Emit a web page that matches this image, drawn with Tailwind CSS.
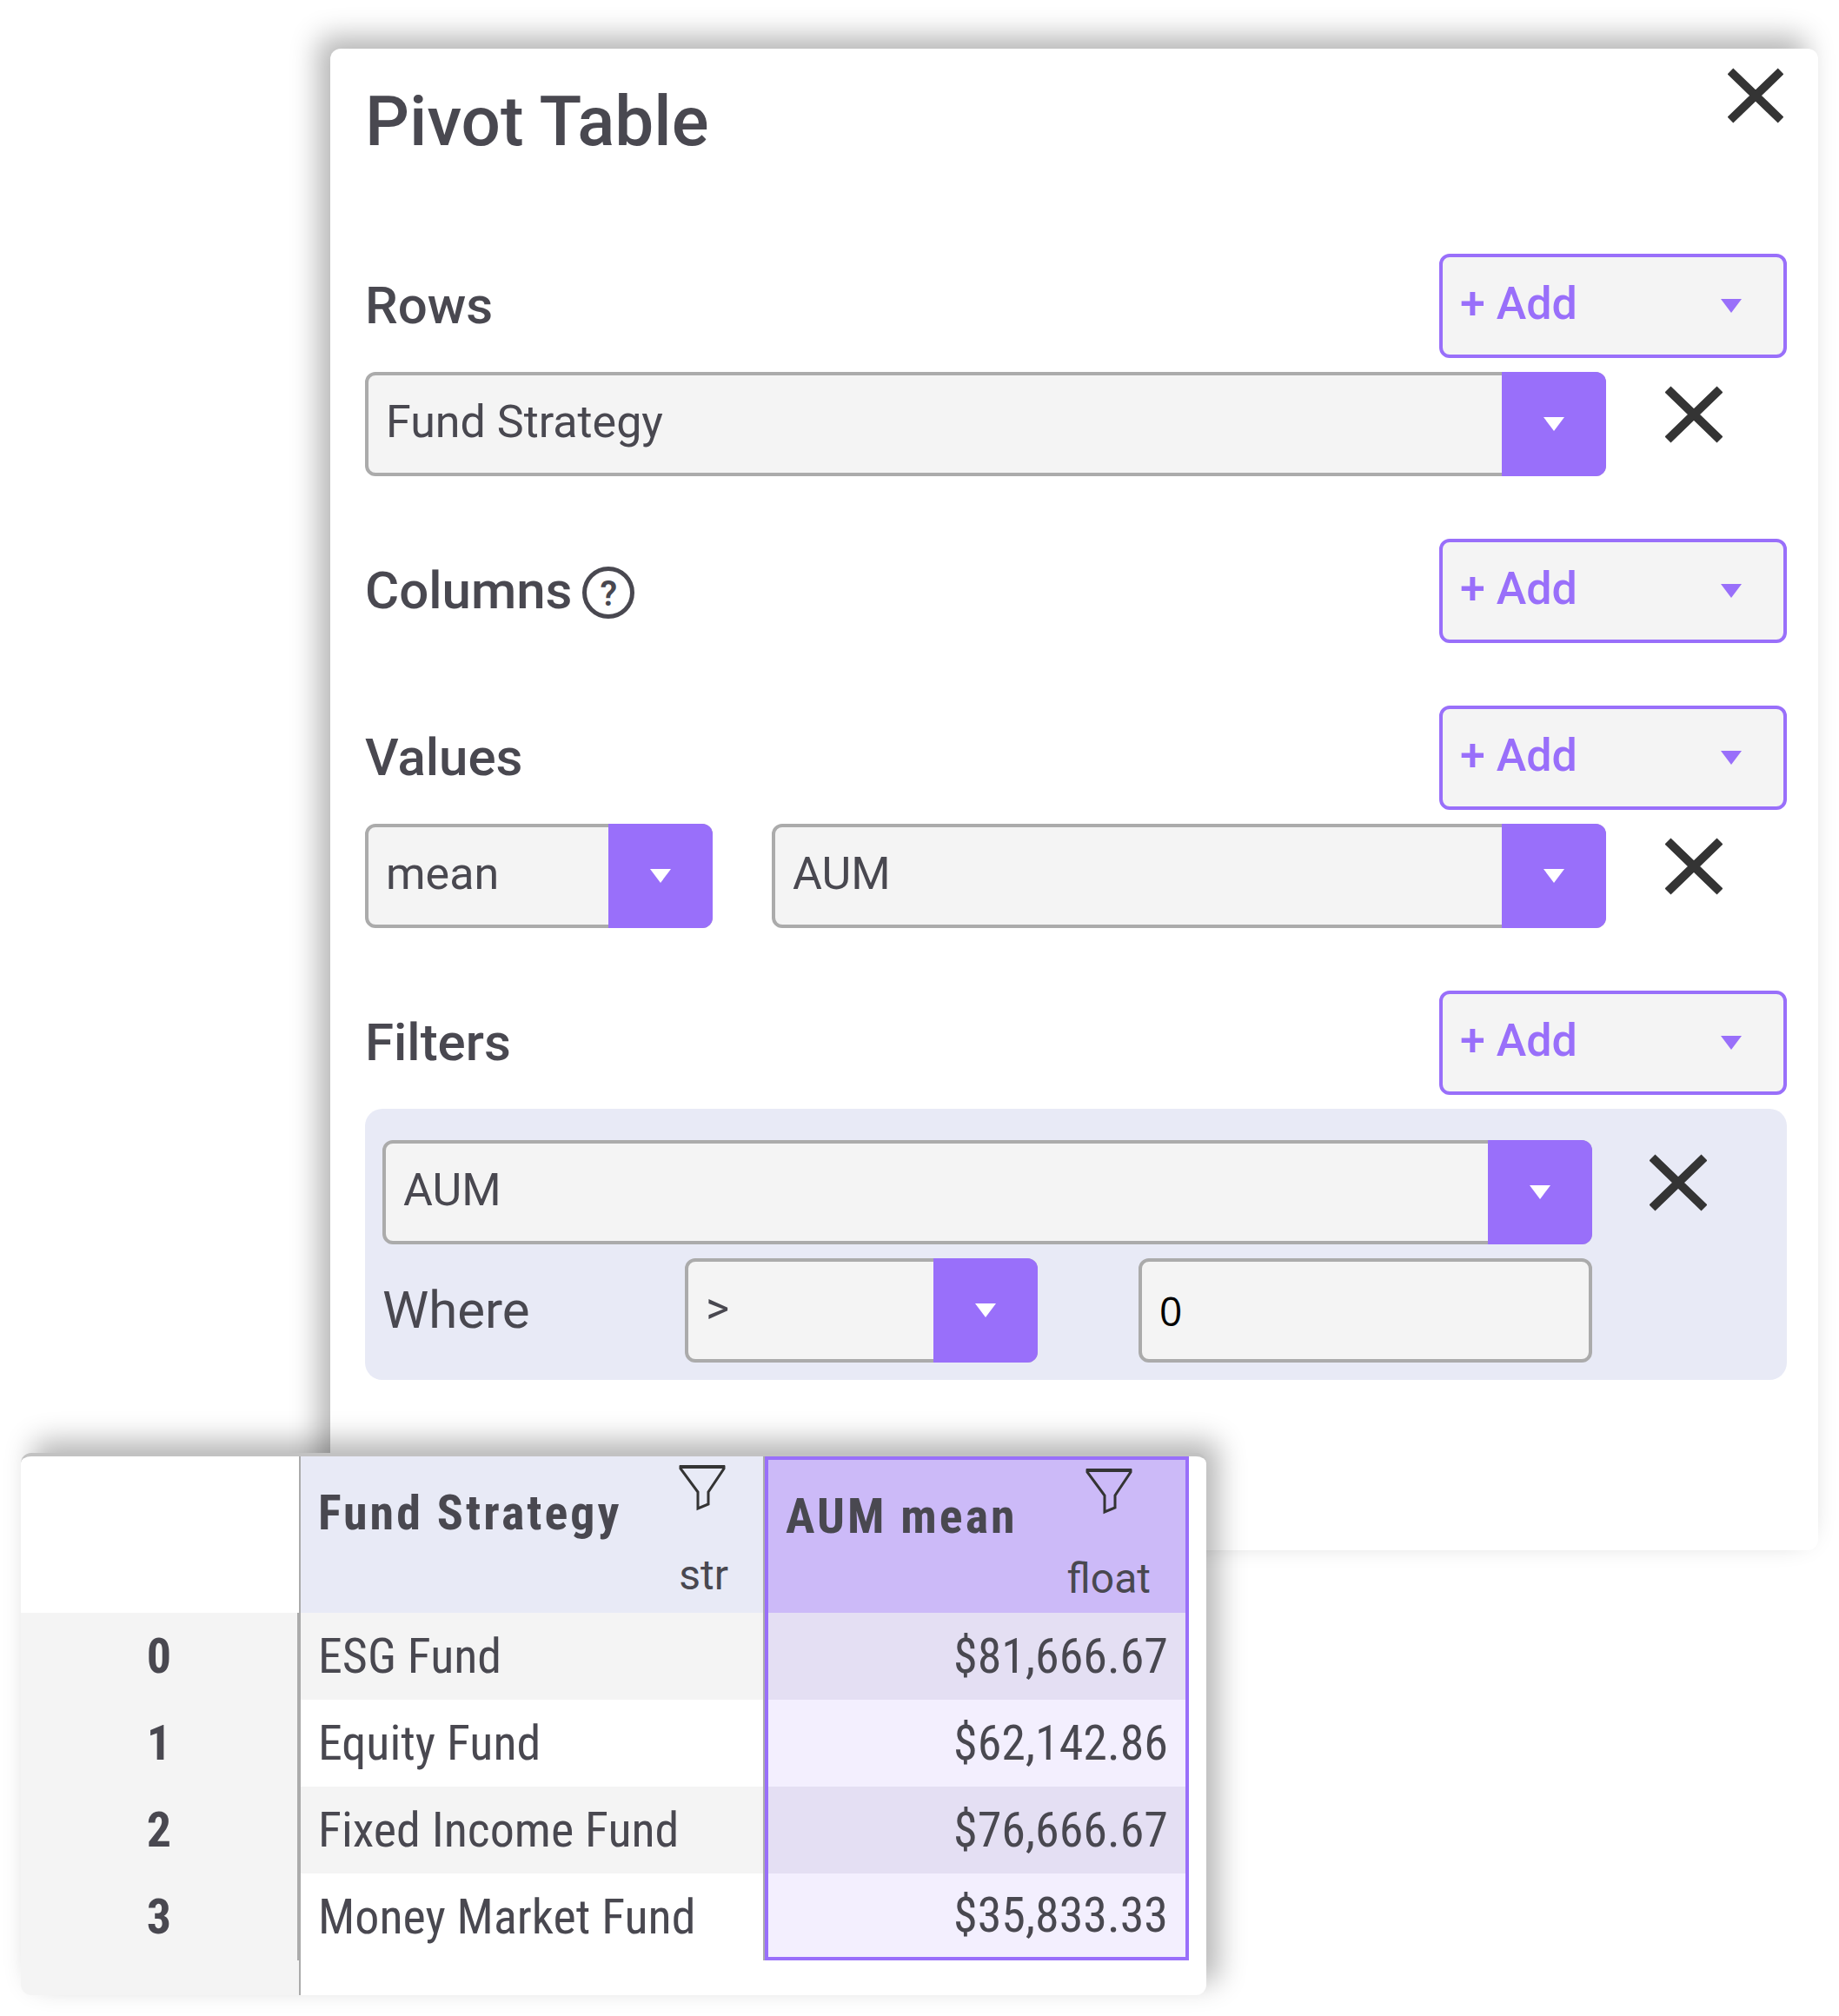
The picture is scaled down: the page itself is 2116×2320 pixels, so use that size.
<!DOCTYPE html>
<html lang="en">
<head>
<meta charset="utf-8">
<title>Pivot Table</title>
<script src="https://cdn.jsdelivr.net/npm/@tailwindcss/browser@4"></script>
</head>
<body class="bg-white font-['Roboto',sans-serif] text-[#494850]">
<svg class="hidden">
  <symbol id="cross" viewBox="0 0 66 66"><path d="M3 4 63 62M63 4 3 62" fill="none" stroke="#343434" stroke-width="10"/></symbol>
  <symbol id="caret" viewBox="0 0 24 16"><path d="M0 0h24L12 16z" fill="currentColor"/></symbol>
  <symbol id="funnel" viewBox="0 0 54 56"><path d="M2 4h50v2L34 33v14l-12 5V33L2 6z" fill="none" stroke="#343434" stroke-width="3"/><path d="M1 4h52" stroke="#343434" stroke-width="4"/></symbol>
</svg>

<main class="pt-14 pb-6">
  <section class="ml-[380px] mr-6 rounded-xl bg-white pt-[22px] pr-9 pb-[196px] pl-10 shadow-[-14px_-14px_32px_rgba(0,0,0,0.29)]">
    <header class="flex items-start justify-between">
      <h1 class="mt-[22px] text-[80px] leading-[80px] font-medium">Pivot Table</h1>
      <button type="button" aria-label="Close" class="mr-1 size-16"><svg class="size-full"><use href="#cross"/></svg></button>
    </header>

    <div class="mt-28 flex flex-col gap-[72px]">
      <div class="flex flex-col gap-4">
        <div class="flex items-center justify-between">
          <h2 class="text-[60px] leading-[60px] font-medium">Rows</h2>
          <div class="relative h-[120px] w-[400px]">
            <select aria-label="Add row" class="size-full appearance-none rounded-xl border-4 border-[#996ffa] bg-[#f4f4f4] pb-1 pl-5 text-[52px] font-medium text-[#996ffa]"><option>+ Add</option></select>
            <svg class="pointer-events-none absolute top-[52px] right-[52px] h-4 w-6 text-[#996ffa]"><use href="#caret"/></svg>
          </div>
        </div>
        <div class="flex items-start">
          <div class="relative h-[120px] flex-1">
            <select aria-label="Row field" class="size-full appearance-none rounded-xl border-4 border-[#ababab] bg-[#f4f4f4] pb-1 pl-5 text-[52px]"><option>Fund Strategy</option></select>
            <span class="pointer-events-none absolute inset-y-0 right-0 flex w-[120px] items-center justify-center rounded-r-xl bg-[#996ffa] text-white"><svg class="h-4 w-6"><use href="#caret"/></svg></span>
          </div>
          <button type="button" aria-label="Remove row" class="mt-4 mr-[74px] ml-[68px] size-[66px]"><svg class="size-full"><use href="#cross"/></svg></button>
        </div>
      </div>

      <div class="flex items-center justify-between">
        <div class="flex items-center gap-3">
          <h2 class="text-[60px] leading-[60px] font-medium">Columns</h2>
          <span class="mt-1 flex size-[60px] items-center justify-center rounded-full border-5 border-[#494850] pt-1 text-[40px] font-semibold">?</span>
        </div>
        <div class="relative h-[120px] w-[400px]">
          <select aria-label="Add column" class="size-full appearance-none rounded-xl border-4 border-[#996ffa] bg-[#f4f4f4] pb-1 pl-5 text-[52px] font-medium text-[#996ffa]"><option>+ Add</option></select>
          <svg class="pointer-events-none absolute top-[52px] right-[52px] h-4 w-6 text-[#996ffa]"><use href="#caret"/></svg>
        </div>
      </div>

      <div class="flex flex-col gap-4">
        <div class="flex items-center justify-between">
          <h2 class="text-[60px] leading-[60px] font-medium">Values</h2>
          <div class="relative h-[120px] w-[400px]">
            <select aria-label="Add value" class="size-full appearance-none rounded-xl border-4 border-[#996ffa] bg-[#f4f4f4] pb-1 pl-5 text-[52px] font-medium text-[#996ffa]"><option>+ Add</option></select>
            <svg class="pointer-events-none absolute top-[52px] right-[52px] h-4 w-6 text-[#996ffa]"><use href="#caret"/></svg>
          </div>
        </div>
        <div class="flex items-start">
          <div class="relative mr-[68px] h-[120px] w-[400px]">
            <select aria-label="Aggregation" class="size-full appearance-none rounded-xl border-4 border-[#ababab] bg-[#f4f4f4] pb-1 pl-5 text-[52px]"><option>mean</option></select>
            <span class="pointer-events-none absolute inset-y-0 right-0 flex w-[120px] items-center justify-center rounded-r-xl bg-[#996ffa] text-white"><svg class="h-4 w-6"><use href="#caret"/></svg></span>
          </div>
          <div class="relative h-[120px] flex-1">
            <select aria-label="Value field" class="size-full appearance-none rounded-xl border-4 border-[#ababab] bg-[#f4f4f4] pb-1 pl-5 text-[52px]"><option>AUM</option></select>
            <span class="pointer-events-none absolute inset-y-0 right-0 flex w-[120px] items-center justify-center rounded-r-xl bg-[#996ffa] text-white"><svg class="h-4 w-6"><use href="#caret"/></svg></span>
          </div>
          <button type="button" aria-label="Remove value" class="mt-4 mr-[74px] ml-[68px] size-[66px]"><svg class="size-full"><use href="#cross"/></svg></button>
        </div>
      </div>

      <div class="flex flex-col gap-4">
        <div class="flex items-center justify-between">
          <h2 class="text-[60px] leading-[60px] font-medium">Filters</h2>
          <div class="relative h-[120px] w-[400px]">
            <select aria-label="Add filter" class="size-full appearance-none rounded-xl border-4 border-[#996ffa] bg-[#f4f4f4] pb-1 pl-5 text-[52px] font-medium text-[#996ffa]"><option>+ Add</option></select>
            <svg class="pointer-events-none absolute top-[52px] right-[52px] h-4 w-6 text-[#996ffa]"><use href="#caret"/></svg>
          </div>
        </div>
        <div class="flex items-start rounded-[20px] bg-[#e8eaf6] pt-9 pr-5 pb-5 pl-5">
          <div class="flex flex-1 flex-col gap-4">
            <div class="relative h-[120px]">
              <select aria-label="Filter field" class="size-full appearance-none rounded-xl border-4 border-[#ababab] bg-[#f4f4f4] pb-1 pl-5 text-[52px]"><option>AUM</option></select>
              <span class="pointer-events-none absolute inset-y-0 right-0 flex w-[120px] items-center justify-center rounded-r-xl bg-[#996ffa] text-white"><svg class="h-4 w-6"><use href="#caret"/></svg></span>
            </div>
            <div class="flex items-center">
              <label for="amount" class="w-1/4 text-[60px] leading-[60px]">Where</label>
              <div class="relative h-[120px] flex-[406]">
                <select aria-label="Condition" class="size-full appearance-none rounded-xl border-4 border-[#ababab] bg-[#f4f4f4] pb-1 pl-5 text-[52px]"><option>&gt;</option></select>
                <span class="pointer-events-none absolute inset-y-0 right-0 flex w-[120px] items-center justify-center rounded-r-xl bg-[#996ffa] text-white"><svg class="h-4 w-6"><use href="#caret"/></svg></span>
              </div>
              <div class="ml-[116px] h-[120px] flex-[522]">
                <input id="amount" type="text" value="0" class="size-full rounded-xl border-4 border-[#ababab] bg-[#f4f4f4] px-5 font-['Open_Sans',sans-serif] text-[46px] text-black">
              </div>
            </div>
          </div>
          <button type="button" aria-label="Remove filter" class="mt-4 mr-[72px] ml-[66px] size-[66px]"><svg class="size-full"><use href="#cross"/></svg></button>
        </div>
      </div>
    </div>
  </section>

  <section class="relative -mt-28 ml-6 w-fit overflow-hidden rounded-xl border-t-4 border-[#c2c2c2] bg-white pr-5 shadow-[14px_-14px_32px_rgba(0,0,0,0.29)]">
    <table class="border-separate border-spacing-0 font-['Roboto_Condensed','Liberation_Sans_Narrow',Roboto,sans-serif] text-[56px] leading-[56px]">
      <thead>
        <tr class="h-[180px] text-left align-top">
          <td class="w-[322px] border-r-2 border-[#ababab]"></td>
          <th class="w-[534px] border-r-2 border-[#ababab] bg-[#e8eaf6] p-0 font-bold">
            <div class="flex items-start justify-between pr-[43px] pl-5">
              <span class="mt-[37px] tracking-[3px]">Fund Strategy</span>
              <button type="button" aria-label="Filter Fund Strategy" class="mt-2 h-14 w-[54px]"><svg class="size-full"><use href="#funnel"/></svg></button>
            </div>
            <div class="mt-5 pr-10 text-right font-['Roboto',sans-serif] text-[48px] leading-[48px] font-normal">str</div>
          </th>
          <th class="w-[488px] border-4 border-b-0 border-[#996ffa] bg-[#ccbaf8] p-0 font-bold">
            <div class="flex items-start justify-between pr-[61px] pl-5">
              <span class="mt-[37px] tracking-[3px]">AUM mean</span>
              <button type="button" aria-label="Filter AUM mean" class="mt-2 h-14 w-[54px]"><svg class="size-full"><use href="#funnel"/></svg></button>
            </div>
            <div class="mt-5 pr-10 text-right font-['Roboto',sans-serif] text-[48px] leading-[48px] font-normal">float</div>
          </th>
        </tr>
      </thead>
      <tbody>
        <tr class="h-[100px]">
          <th class="border-r-4 border-[#ababab] bg-[#f4f4f4] font-bold">0</th>
          <td class="border-r-2 border-[#ababab] bg-[#f4f4f4] pl-5">ESG Fund</td>
          <td class="border-x-4 border-[#996ffa] bg-[#e4dff3] pr-5 text-right">$81,666.67</td>
        </tr>
        <tr class="h-[100px]">
          <th class="border-r-4 border-[#ababab] bg-[#f4f4f4] font-bold">1</th>
          <td class="border-r-2 border-[#ababab] pl-5">Equity Fund</td>
          <td class="border-x-4 border-[#996ffa] bg-[#f3effe] pr-5 text-right">$62,142.86</td>
        </tr>
        <tr class="h-[100px]">
          <th class="border-r-4 border-[#ababab] bg-[#f4f4f4] font-bold">2</th>
          <td class="border-r-2 border-[#ababab] bg-[#f4f4f4] pl-5">Fixed Income Fund</td>
          <td class="border-x-4 border-[#996ffa] bg-[#e4dff3] pr-5 text-right">$76,666.67</td>
        </tr>
        <tr class="h-[100px]">
          <th class="border-r-4 border-[#ababab] bg-[#f4f4f4] font-bold">3</th>
          <td class="border-r-2 border-[#ababab] pl-5">Money Market Fund</td>
          <td class="border-4 border-t-0 border-[#996ffa] bg-[#f3effe] pr-5 text-right">$35,833.33</td>
        </tr>
        <tr class="h-10">
          <td class="border-r-2 border-[#ababab] bg-[#f4f4f4]"></td>
          <td></td>
          <td></td>
        </tr>
      </tbody>
    </table>
  </section>
</main>
</body>
</html>
